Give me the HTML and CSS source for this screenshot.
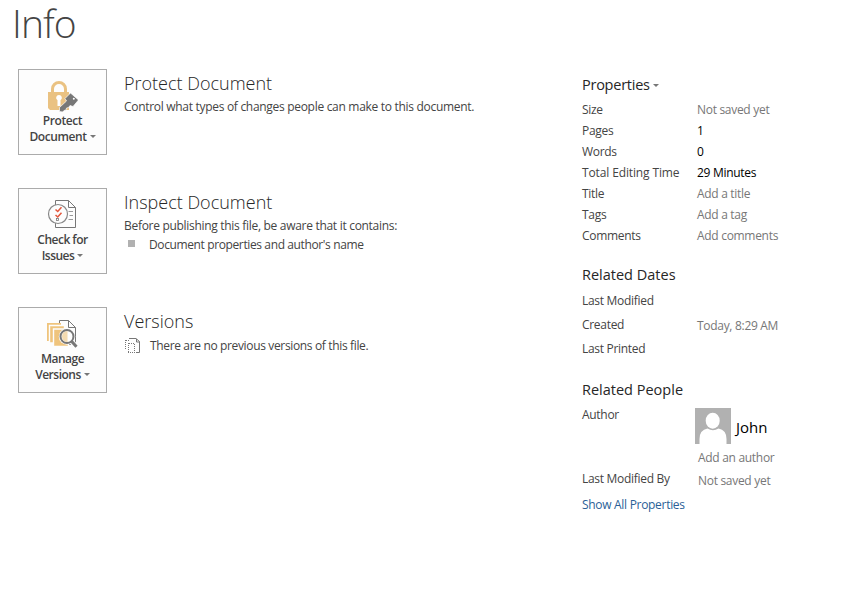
FILE: index.html
```html
<!DOCTYPE html>
<html lang="en">
<head>
<meta charset="utf-8">
<title>Info</title>
<link rel="stylesheet" href="styles.css">
</head>
<body>
<h1 class="page-title">Info</h1>
<div class="layout">
  <main class="actions">
    <section class="action">
      <button class="tile">
        <svg class="tile-icon" width="31" height="32" viewBox="0 0 31 32">
          <path d="M5.500 13V9a6.500 6.500 0 0 1 13 0V13" fill="none" stroke="#eac282" stroke-width="3"/>
          <path d="M1 12h21v18H3l-2-2z" fill="#eac282"/>
          <path d="M12 15a2.800 2.800 0 0 1 1.500 5.200V26h-3v-5.800A2.800 2.800 0 0 1 12 15z" fill="#fff"/>
          <path d="M12.500 31.500v-4l7-6.500-1.500-2.500L23.500 13 31.500 20 26 26.500l-3-1-1.500 2-2 .5-.5 2-2 .5-1.500 1.500z" fill="#777" stroke="#fdfdfd" stroke-width=".7"/>
          <circle cx="26.800" cy="18.800" r="1" fill="#fff"/>
        </svg>
        <span class="tile-label">Protect<br>Document<i class="caret"></i></span>
      </button>
      <div class="detail">
        <h2>Protect Document</h2>
        <p>Control what types of changes people can make to this document.</p>
      </div>
    </section>
    <section class="action">
      <button class="tile">
        <svg class="tile-icon" width="31" height="32" viewBox="0 0 31 32" fill="none" stroke="#777">
          <path d="M8.500 1.500h13l7 7v20h-20zM21.500 1.500v7h7" fill="#fdfdfd"/>
          <path d="M21.500 12.500H26M22.500 16.500H26M21.500 20.500H26" stroke="#999"/>
          <circle cx="11" cy="15" r="9.500" fill="#fdfdfd" stroke="#888" stroke-width="1.200"/>
          <path d="M8.500 10.500l2.200 2 3.800-4.300M8.500 16l2.200 2 3.800-4.300" stroke="#e4573d" stroke-width="1.500"/>
          <rect x="9.500" y="19.500" width="2" height="2" stroke-width=".8"/>
        </svg>
        <span class="tile-label tight">Check for<br>Issues<i class="caret"></i></span>
      </button>
      <div class="detail">
        <h2>Inspect Document</h2>
        <p>Before publishing this file, be aware that it contains:</p>
        <ul class="findings"><li>Document properties and author's name</li></ul>
      </div>
    </section>
    <section class="action">
      <button class="tile">
        <svg class="tile-icon" width="31" height="32" viewBox="0 0 31 32" fill="none">
          <path d="M12.500 2.500h9l7 7v17h-16zM21.500 2.500v7h7" stroke="#777" fill="#fdfdfd"/>
          <path d="M0 5h14v18H0z" fill="#efc47d"/>
          <path d="M2.500 7.500h15V25h-15z" fill="#efc47d" stroke="#fdfdfd" stroke-width="1.400"/>
          <path d="M6.500 11h15v17.500h-15z" fill="#efc47d" stroke="#fdfdfd" stroke-width="1.400"/>
          <path d="M24 23l6.500 7" stroke="#fdfdfd" stroke-width="5"/>
          <circle cx="20" cy="18.500" r="8.200" fill="#fdfdfd"/>
          <path d="M24.300 23l5.200 5.700" stroke="#777" stroke-width="3"/>
          <circle cx="20" cy="18.500" r="6.500" fill="#fdfdfd" stroke="#777" stroke-width="2"/>
          <path d="M20.500 13a5.500 5.500 0 0 0 0 11z" fill="#efc47d" fill-opacity=".6"/>
        </svg>
        <span class="tile-label tight">Manage<br>Versions<i class="caret"></i></span>
      </button>
      <div class="detail">
        <h2>Versions</h2>
        <div class="no-versions">
          <svg width="16" height="16" viewBox="0 0 16 16" fill="none" stroke="#777">
            <path d="M5 .500h7l3.500 3v11H12M12.500 1v3h3"/>
            <path d="M1.500 2v10M2 2.500h3M4.500 5v9M10.500 6v8M5 5.500h6M4 14.500h8" stroke-dasharray="1 1"/>
          </svg>
          <span>There are no previous versions of this file.</span>
        </div>
      </div>
    </section>
  </main>
  <aside class="properties">
    <h3 class="menu-heading">Properties<i class="caret"></i></h3>
    <dl class="props">
      <dt>Size</dt><dd>Not saved yet</dd>
      <dt>Pages</dt><dd class="set">1</dd>
      <dt>Words</dt><dd class="set">0</dd>
      <dt class="wide">Total Editing Time</dt><dd class="set">29 Minutes</dd>
      <dt>Title</dt><dd>Add a title</dd>
      <dt>Tags</dt><dd>Add a tag</dd>
      <dt>Comments</dt><dd>Add comments</dd>
    </dl>
    <h3 class="group">Related Dates</h3>
    <dl class="props dates">
      <dt>Last Modified</dt><dd></dd>
      <dt>Created</dt><dd class="created">Today, 8:29 AM</dd>
      <dt>Last Printed</dt><dd></dd>
    </dl>
    <h3 class="group">Related People</h3>
    <div class="people">
      <span class="who">Author</span>
      <div class="author">
        <svg width="36" height="36" viewBox="0 0 36 36">
          <path d="M0 0h36v36H0z" fill="#b1b1b1"/>
          <ellipse cx="17.700" cy="12.700" rx="7" ry="8" fill="#fff"/>
          <path d="M4.500 36V31q0-9 8-10.500 5.500 3.500 11 0 8 1.500 8 10.500v5z" fill="#fff"/>
        </svg>
        <span class="name">John</span>
      </div>
      <span class="hint add-author">Add an author</span>
      <span class="who modified">Last Modified By</span>
      <span class="hint not-saved">Not saved yet</span>
    </div>
    <a class="show-all">Show All Properties</a>
  </aside>
</div>
</body>
</html>
```
FILE: styles.css
```css
* { box-sizing: border-box; }
body {
  margin: 0;
  height: 591px;
  overflow: hidden;
  background: #fff;
  color: #444;
  font: 12px/16px "Open Sans", "Noto Sans", sans-serif;
  letter-spacing: -0.3px;
}
h1, h2, h3, p, dl, dd, ul { margin: 0; padding: 0; font-weight: 400; }
.page-title {
  height: 69px;
  padding: 0 0 0 12px;
  font-size: 39px;
  line-height: 46px;
  font-weight: 300;
  letter-spacing: -0.9px;
}
.layout { display: grid; grid-template-columns: 564px 1fr; padding-left: 18px; }
.actions { display: flex; flex-direction: column; gap: 33px; }
.action { display: flex; gap: 17px; height: 86px; }
.tile {
  width: 89px;
  height: 86px;
  padding: 10px 0 0;
  border: 1px solid #ababab;
  background: #fdfdfd;
  color: #444;
  font: 600 12px/16px "Open Sans", "Noto Sans", sans-serif;
  letter-spacing: -0.42px;
  display: flex;
  flex-direction: column;
  align-items: center;
}
.tile-icon { flex: none; }
.tile-label { margin-top: 1px; white-space: nowrap; }
.tile-label.tight { letter-spacing: -0.5px; }
.caret {
  display: inline-block;
  margin-left: 3px;
  vertical-align: 3px;
  border: solid transparent;
  border-width: 3px 3px 0;
  border-top-color: #777;
}
.detail { padding-top: 2px; }
h2 {
  margin-bottom: 4px;
  font-size: 18px;
  line-height: 24px;
  color: #262626;
  font-weight: 330;
  letter-spacing: 0;
}
.findings { list-style: none; margin-top: 3px; }
.findings li { display: flex; align-items: flex-start; gap: 14px; padding-left: 4px; letter-spacing: -0.38px; }
.findings li::before { content: ""; width: 7px; height: 7px; margin-top: 3px; background: #b1b1b1; }
.no-versions { display: flex; gap: 10px; padding-top: 1px; letter-spacing: -0.35px; }
.properties { padding-top: 6px; }
h3 { font-size: 14.5px; line-height: 20px; color: #262626; letter-spacing: 0; }
.menu-heading { letter-spacing: -0.25px; }
.props { display: grid; grid-template-columns: 115px 1fr; grid-auto-rows: 21px; line-height: 21px; padding-top: 4px; }
.props dd, .hint { color: #777; }
.props dd.set { color: #000; }
.props .wide { letter-spacing: -0.13px; }
.dates { grid-auto-rows: 24px; line-height: 24px; }
.dates .created { padding-top: 1px; }
.group { margin: 19px 0 0; }
.people { display: grid; grid-template-columns: 113px 1fr; }
.author { display: flex; gap: 5px; padding-top: 8px; }
.name { font-size: 15px; line-height: 20px; color: #000; padding-top: 9px; letter-spacing: 0; }
.who { padding-top: 7px; }
.add-author { grid-column: 2; padding: 6px 0 0 3px; }
.modified { padding-top: 5px; }
.not-saved { padding: 7px 0 0 3px; }
.show-all { display: block; padding-top: 8px; color: #2b5f97; }
```
